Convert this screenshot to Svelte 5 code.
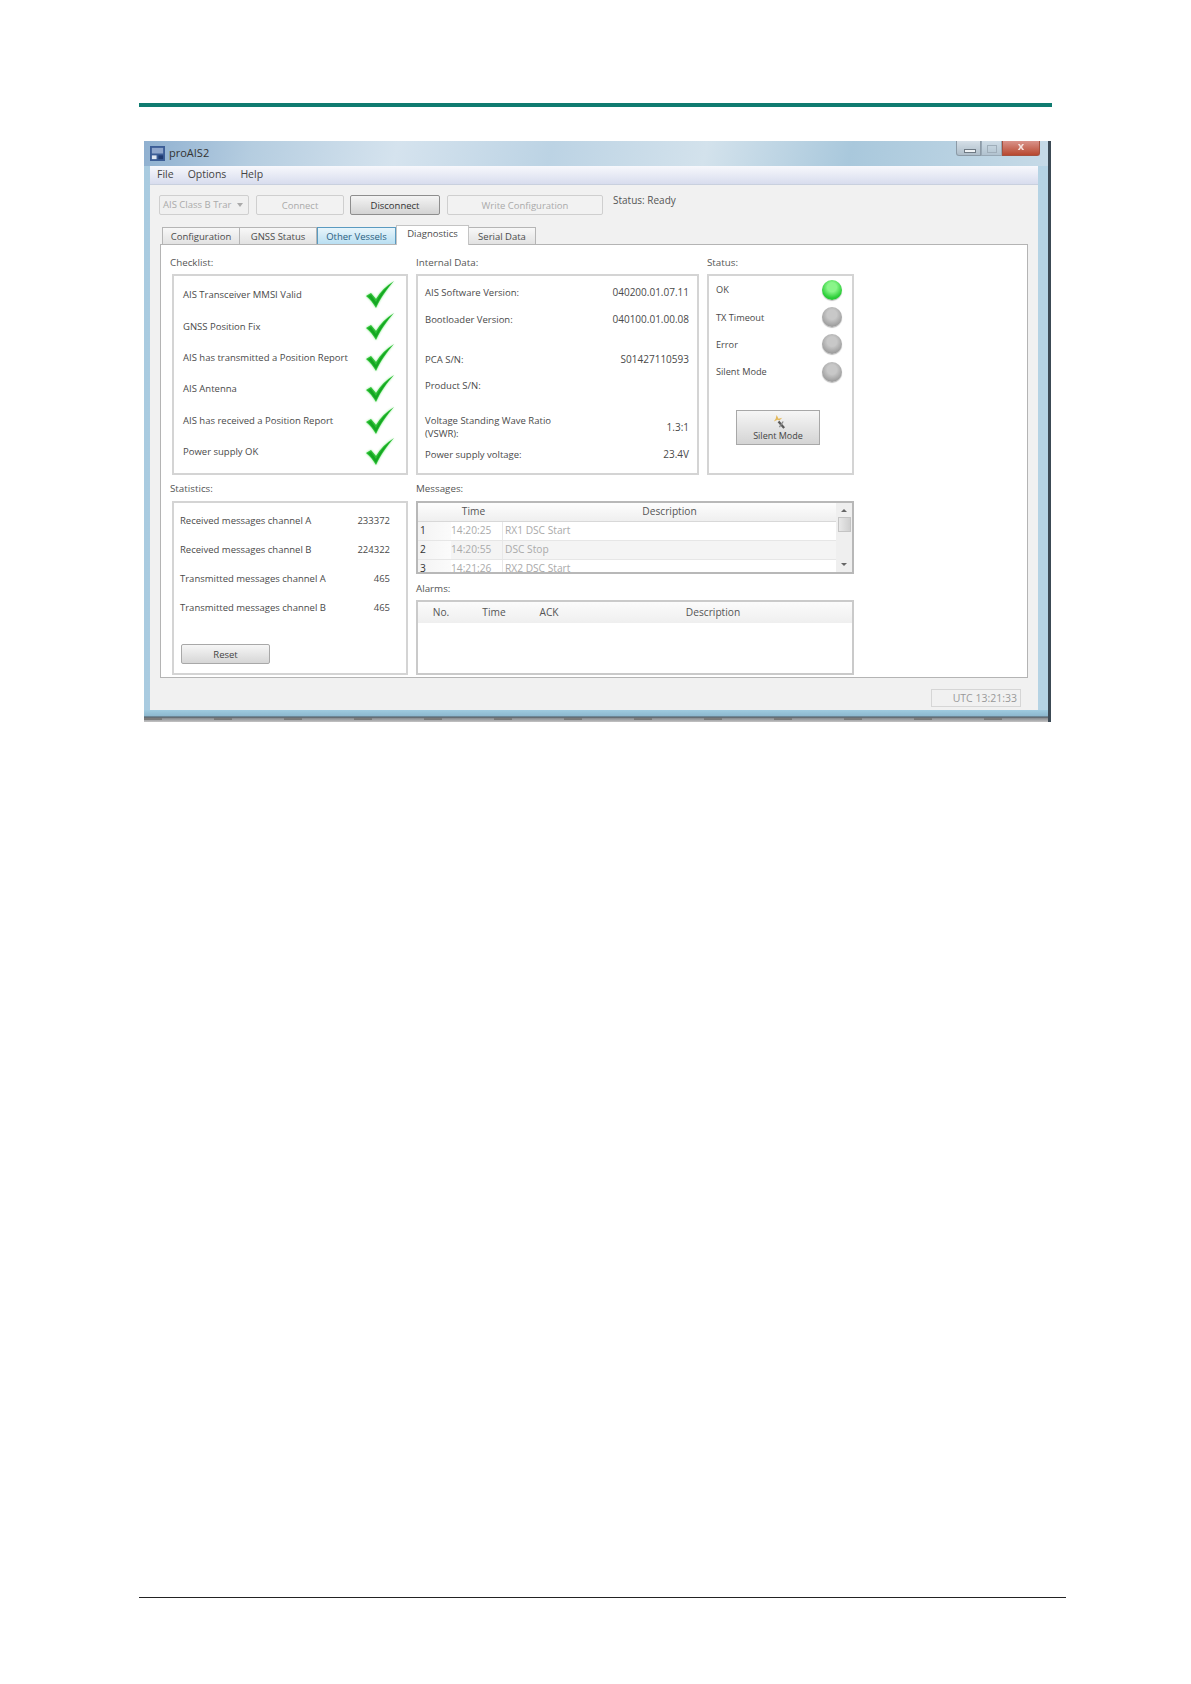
<script>
  const checklist = [
    'AIS Transceiver MMSI Valid',
    'GNSS Position Fix',
    'AIS has transmitted a Position Report',
    'AIS Antenna',
    'AIS has received a Position Report',
    'Power supply OK'
  ];
  const internal = [
    { label: 'AIS Software Version:', value: '040200.01.07.11', cls: 'r1' },
    { label: 'Bootloader Version:', value: '040100.01.00.08', cls: 'r2' },
    { label: 'PCA S/N:', value: 'S01427110593', cls: 'r3' },
    { label: 'Product S/N:', value: '', cls: 'r4' },
    { label: 'Voltage Standing Wave Ratio (VSWR):', value: '1.3:1', cls: 'r5' },
    { label: 'Power supply voltage:', value: '23.4V', cls: 'r6' }
  ];
  const leds = [
    { label: 'OK', on: true },
    { label: 'TX Timeout', on: false },
    { label: 'Error', on: false },
    { label: 'Silent Mode', on: false }
  ];
  const stats = [
    ['Received messages channel A', '233372'],
    ['Received messages channel B', '224322'],
    ['Transmitted messages channel A', '465'],
    ['Transmitted messages channel B', '465']
  ];
  const messages = [
    ['1', '14:20:25', 'RX1 DSC Start'],
    ['2', '14:20:55', 'DSC Stop'],
    ['3', '14:21:26', 'RX2 DSC Start']
  ];
  const tabs = ['Configuration', 'GNSS Status', 'Other Vessels', 'Diagnostics', 'Serial Data'];
</script>

<div class="page">
  <div class="rule"></div>

  <div class="window">
    <div class="caption">
      <svg class="appicon" viewBox="0 0 16 16">
        <rect width="16" height="16" fill="#3c5d96" />
        <rect x="2" y="2" width="12" height="6" fill="#8fa6cc" />
        <rect x="2" y="10" width="5" height="4" fill="#dfe6f2" />
        <rect x="9" y="10" width="5" height="4" fill="#1f3a70" />
      </svg>
      <span class="title">proAIS2</span>
      <div class="controls">
        <span class="ctl min"></span>
        <span class="ctl max"></span>
        <span class="ctl close">x</span>
      </div>
    </div>

    <div class="client">
      <div class="menu">
        <span>File</span>
        <span>Options</span>
        <span>Help</span>
      </div>

      <div class="toolbar">
        <div class="combo">AIS Class B Trar <span class="arrow"></span></div>
        <button class="btn connect" disabled>Connect</button>
        <button class="btn disconnect">Disconnect</button>
        <button class="btn write" disabled>Write Configuration</button>
        <span class="status">Status: Ready</span>
      </div>

      <div class="tabs">
        {#each tabs as t}
          <div class="tab" class:active={t === 'Diagnostics'} class:hot={t === 'Other Vessels'}>{t}</div>
        {/each}
      </div>

      <div class="pane">
        <div class="grid">
          <section class="check">
            <h4>Checklist:</h4>
            <div class="box checkbox">
              {#each checklist as c}
                <div class="checkrow">
                  <span>{c}</span>
                  <svg class="tick" viewBox="0 0 30 27">
                    <path d="M1 15 L6 12 L11 18 C15 11 21 5 29 0 C22 8 16 16 11 27 C8 22 5 18 1 15 Z" fill="#2cc034" />
                    <path d="M3 15 L6 14 L11 21 C15 13 20 7 26 3 C20 9 15 17 11 25 C8 21 6 18 3 15 Z" fill="#14a522" />
                  </svg>
                </div>
              {/each}
            </div>
          </section>

          <section class="internal">
            <h4>Internal Data:</h4>
            <div class="box intbox">
              {#each internal as row}
                <div class="introw {row.cls}">
                  <span class="intlabel">{row.label}</span>
                  <span class="intval">{row.value}</span>
                </div>
              {/each}
            </div>
          </section>

          <section class="state">
            <h4>Status:</h4>
            <div class="box statebox">
              {#each leds as l}
                <div class="ledrow">
                  <span>{l.label}</span>
                  <span class="led" class:on={l.on}></span>
                </div>
              {/each}
              <button class="silent">
                <svg class="wand" viewBox="0 0 16 16">
                  <path d="M6 1 L8 5 L12 4 L9 7 L7 6 L3 8 L5 5 Z" fill="#e3b85a" />
                  <path d="M8 8 L14 15" stroke="#5a5a5a" stroke-width="2.4" />
                  <path d="M13 8 L9 14" stroke="#8b8b8b" stroke-width="1.4" />
                </svg>
                <span>Silent Mode</span>
              </button>
            </div>
          </section>

          <section class="stats">
            <h4>Statistics:</h4>
            <div class="box statbox">
              {#each stats as s}
                <div class="statrow"><span>{s[0]}</span><span>{s[1]}</span></div>
              {/each}
              <button class="btn reset">Reset</button>
            </div>
          </section>

          <section class="tables">
            <h4>Messages:</h4>
            <div class="box msgbox">
              <div class="msgmain">
                <div class="msgrow head">
                  <span class="mnum"></span>
                  <span class="mtime">Time</span>
                  <span class="mdesc">Description</span>
                </div>
                {#each messages as m}
                  <div class="msgrow">
                    <span class="mnum">{m[0]}</span>
                    <span class="mtime">{m[1]}</span>
                    <span class="mdesc">{m[2]}</span>
                  </div>
                {/each}
              </div>
              <div class="scroll">
                <span class="up"></span>
                <span class="thumb"></span>
                <span class="down"></span>
              </div>
            </div>

            <h4 class="alarmlabel">Alarms:</h4>
            <div class="box alarmbox">
              <div class="alarmhead">
                <span class="ano">No.</span>
                <span class="atime">Time</span>
                <span class="aack">ACK</span>
                <span class="adesc">Description</span>
              </div>
            </div>
          </section>
        </div>
      </div>

      <div class="statusbar">
        <span class="utc">UTC 13:21:33</span>
      </div>
    </div>

    <div class="under"></div>
  </div>

  <div class="footer-rule"></div>
</div>

<style>
  :global(body) {
    margin: 0;
    background: #fff;
  }
  .page {
    width: 1191px;
    height: 1684px;
    box-sizing: border-box;
    padding: 103px 0 0 139px;
    font-family: "Open Sans", "Liberation Sans", sans-serif;
    font-size: 9.5px;
    color: #4a4a4a;
    overflow: hidden;
  }
  .rule {
    width: 913px;
    height: 4px;
    background: #0f7b70;
  }
  .footer-rule {
    width: 927px;
    height: 1px;
    background: #222;
    margin-top: 875px;
  }

  .window {
    width: 907px;
    height: 581px;
    margin: 34px 0 0 5px;
    box-sizing: border-box;
    padding: 0 10px 0 6px;
    background: linear-gradient(90deg, #a9cbe0 0, #c4dbe8 40%, #b5d3e4 100%);
    border-right: 3px solid #3c4a55;
    display: flex;
    flex-direction: column;
    filter: blur(0.7px);
  }
  .caption {
    height: 25px;
    margin: 0 -10px 0 -6px;
    padding: 0 8px 0 6px;
    display: flex;
    align-items: flex-start;
    background: linear-gradient(102deg, #8fb0d0 0, #b5cde0 12%, #d5e3ee 28%, #bcd3e4 45%, #d3e2ec 62%, #a9c8dc 78%, #c6dae7 100%);
    color: #333;
  }
  .appicon {
    width: 15px;
    height: 15px;
    margin-top: 5px;
  }
  .title {
    margin: 4px 0 0 4px;
    font-size: 11px;
  }
  .controls {
    margin-left: auto;
    display: flex;
    height: 15px;
  }
  .ctl {
    height: 15px;
    box-sizing: border-box;
    border: 1px solid #8c9aa6;
    border-top: none;
    background: linear-gradient(#d5dfe7, #aebdc9);
    position: relative;
  }
  .min { width: 25px; border-radius: 0 0 0 3px; }
  .min::after {
    content: '';
    position: absolute;
    left: 7px;
    top: 8px;
    width: 10px;
    height: 2px;
    border: 1px solid #6f7a84;
    background: #eef2f5;
  }
  .max { width: 21px; opacity: 0.75; }
  .max::after {
    content: '';
    position: absolute;
    left: 5px;
    top: 4px;
    width: 8px;
    height: 6px;
    border: 1px solid #96a2ac;
  }
  .close {
    width: 38px;
    border-color: #a5513f;
    border-radius: 0 0 3px 0;
    background: linear-gradient(#d9938a, #b8482f);
    color: #f5e0dc;
    font-size: 11px;
    font-weight: 700;
    line-height: 10px;
    text-align: center;
  }

  .client {
    height: 544px;
    background: #f1f1f1;
    display: flex;
    flex-direction: column;
    flex: none;
  }
  .menu {
    height: 19px;
    box-sizing: border-box;
    background: linear-gradient(#f7f8fc, #d8ddee);
    border-bottom: 1px solid #c9d0de;
    display: flex;
    gap: 14px;
    padding: 1px 0 0 7px;
    font-size: 10.5px;
    line-height: 15px;
    color: #444;
  }

  .toolbar {
    margin-top: 10px;
    height: 20px;
    padding-left: 9px;
    display: flex;
    align-items: flex-start;
    gap: 7px;
  }
  .combo {
    width: 90px;
    height: 20px;
    box-sizing: border-box;
    border: 1px solid #cfcfcf;
    border-radius: 2px;
    padding-left: 3px;
    line-height: 18px;
    color: #aaa;
    background: #f0f0f0;
    white-space: nowrap;
    display: flex;
    align-items: center;
  }
  .arrow {
    width: 0;
    height: 0;
    margin-left: 6px;
    border: 3px solid transparent;
    border-top: 4px solid #aaa;
    border-bottom: none;
  }
  .btn {
    height: 20px;
    box-sizing: border-box;
    border: 1px solid #cfcfcf;
    border-radius: 2px;
    padding: 0;
    font: inherit;
    background: #f2f2f2;
    color: #aaa;
  }
  .connect { width: 88px; }
  .disconnect {
    width: 90px;
    margin-left: -1px;
    border-color: #8e8e8e;
    background: linear-gradient(#f4f4f4, #d3d3d3);
    color: #333;
  }
  .write { width: 156px; }
  .status {
    margin: -2px 0 0 3px;
    font-size: 10px;
    color: #555;
  }

  .tabs {
    margin-top: 11px;
    padding-left: 12px;
    height: 18px;
    display: flex;
    align-items: flex-end;
    position: relative;
    z-index: 1;
  }
  .tab {
    width: 78px;
    height: 17px;
    box-sizing: border-box;
    line-height: 17px;
    text-align: center;
    border: 1px solid #b5b5b5;
    border-bottom: none;
    border-left: none;
    background: linear-gradient(#f8f8f8, #e2e2e2);
    color: #4c4c4c;
    white-space: nowrap;
  }
  .tab:first-child { border-left: 1px solid #b5b5b5; }
  .tab:nth-child(2) { width: 77px; }
  .tab:nth-child(3) { width: 79px; }
  .tab:nth-child(5) { width: 67px; }
  .tab.hot {
    background: linear-gradient(#e8f5fb, #b9dff2);
    border-color: #5a9ac0;
    color: #2c5f80;
    border-left: 1px solid #5a9ac0;
  }
  .tab.active {
    width: 73px;
    height: 20px;
    margin-bottom: -1px;
    background: #fff;
    border: 1px solid #c4c4c4;
    border-bottom: none;
    line-height: 15px;
  }

  .pane {
    height: 434px;
    margin: 0 10px;
    box-sizing: border-box;
    border: 1px solid #b4b4b4;
    background: #fff;
    padding: 12px 0 0 9px;
  }
  .grid {
    display: grid;
    grid-template-columns: 238px 283px 147px;
    grid-template-rows: 226px auto;
    column-gap: 8px;
    width: 690px;
  }
  .check { padding-left: 2px; }
  h4 {
    margin: 0;
    height: 17px;
    font-size: 9.8px;
    font-weight: 400;
    line-height: 12px;
    color: #555;
  }
  .stats h4, .tables h4:first-child { height: 18px; }
  .check h4, .stats h4 { margin-left: -2px; }
  .box {
    box-sizing: border-box;
    border: 2px solid #d4d4d4;
    background: #fff;
  }

  .checkbox {
    width: 236px;
    height: 201px;
    padding: 3px 11px 0 9px;
    display: flex;
    flex-direction: column;
  }
  .checkrow {
    height: 31.4px;
    flex: none;
    display: flex;
    align-items: center;
    justify-content: space-between;
  }
  .tick {
    width: 30px;
    height: 27px;
    filter: drop-shadow(0 0 1px #8be88f);
  }

  .intbox {
    height: 201px;
    padding: 5px 8px 0 7px;
  }
  .introw {
    display: flex;
    justify-content: space-between;
    align-items: flex-end;
    line-height: 13px;
  }
  .intlabel { width: 145px; }
  .r1 { margin-top: 5px; }
  .r2 { margin-top: 14px; }
  .r3 { margin-top: 27px; }
  .r4 { margin-top: 13px; }
  .r5 { margin-top: 22px; align-items: center; }
  .r6 { margin-top: 8px; }
  .intval { white-space: nowrap; font-size: 10px; }

  .statebox {
    height: 201px;
    padding: 0 10px 0 7px;
  }
  .ledrow {
    height: 27.4px;
    display: flex;
    align-items: center;
    justify-content: space-between;
    font-size: 9.2px;
  }
  .led {
    width: 20px;
    height: 20px;
    border-radius: 50%;
    background: radial-gradient(circle at 50% 38%, #c8c8c8 0 30%, #a8a8a8 62%, #808080 100%);
    box-shadow: 0 1px 1px #bbb;
  }
  .led.on {
    background: radial-gradient(circle at 50% 36%, #8af58a 0 28%, #2ecf3a 65%, #19a828 100%);
  }
  .silent {
    display: flex;
    flex-direction: column;
    align-items: center;
    width: 84px;
    height: 35px;
    margin: 24px 0 0 20px;
    padding: 3px 0 0;
    box-sizing: border-box;
    border: 1px solid #a8a8a8;
    font: inherit;
    font-size: 9px;
    line-height: 12px;
    color: #444;
    background: linear-gradient(#f6f6f6, #d4d4d4);
  }
  .wand {
    width: 15px;
    height: 15px;
    margin-bottom: 1px;
    flex: none;
  }

  .stats {
    padding-left: 2px;
  }
  .statbox {
    width: 236px;
    height: 174px;
    padding: 3px 16px 0 6px;
    display: flex;
    flex-direction: column;
  }
  .statrow {
    height: 29px;
    flex: none;
    display: flex;
    justify-content: space-between;
    align-items: center;
  }
  .reset {
    width: 89px;
    margin: 22px 0 0 1px;
    flex: none;
    border-color: #a8a8a8;
    background: linear-gradient(#f6f6f6, #d6d6d6);
    color: #444;
  }

  .tables {
    grid-column: 2 / 4;
  }
  .msgbox {
    width: 438px;
    height: 73px;
    display: flex;
    overflow: hidden;
    border-color: #b8b8b8;
    font-size: 10.2px;
  }
  .msgmain {
    flex: 1;
  }
  .msgrow {
    display: flex;
    height: 18px;
    line-height: 17px;
    border-bottom: 1px solid #e6e6e6;
    color: #aaa;
  }
  .msgrow:nth-child(3) { background: #f4f4f4; }
  .msgrow.head {
    height: 18px;
    color: #555;
    background: linear-gradient(#fdfdfd, #efefef);
    border-bottom: 1px solid #d8d8d8;
  }
  .mnum {
    width: 33px;
    padding-left: 2px;
    box-sizing: border-box;
    color: #333;
    background: linear-gradient(90deg, #f3f3f3, #fbfbfb);
  }
  .head .mnum { background: none; }
  .mtime {
    width: 51px;
    border-right: 1px solid #e8e8e8;
  }
  .head .mtime {
    text-align: center;
    padding-right: 6px;
    box-sizing: border-box;
    border: none;
  }
  .mdesc {
    padding-left: 2px;
    flex: 1;
  }
  .head .mdesc {
    text-align: center;
    padding-right: 1px;
  }
  .scroll {
    width: 16px;
    flex: none;
    background: #efefef;
    display: flex;
    flex-direction: column;
    align-items: center;
  }
  .up, .down {
    width: 0;
    height: 0;
    border: 3px solid transparent;
  }
  .up {
    border-bottom: 3px solid #666;
    border-top: none;
    margin-top: 6px;
  }
  .thumb {
    width: 13px;
    height: 15px;
    margin-top: 5px;
    background: linear-gradient(90deg, #e8e8e8, #cfcfcf);
    border: 1px solid #c4c4c4;
    box-sizing: border-box;
  }
  .down {
    border-top: 3px solid #666;
    border-bottom: none;
    margin-top: auto;
    margin-bottom: 6px;
  }

  .alarmlabel {
    margin-top: 9px;
    height: 17px;
  }
  .alarmbox {
    width: 438px;
    height: 75px;
    border-color: #cacaca;
    font-size: 10.2px;
  }
  .alarmhead {
    height: 21px;
    display: flex;
    line-height: 20px;
    background: linear-gradient(#fbfbfb, #efefef);
    color: #555;
  }
  .ano { width: 46px; text-align: center; }
  .atime { width: 60px; text-align: center; }
  .aack { width: 50px; text-align: center; }
  .adesc { flex: 1; text-align: center; }

  .statusbar {
    flex: 1;
    display: flex;
    justify-content: flex-end;
    align-items: flex-start;
    padding: 11px 17px 0 0;
  }
  .utc {
    width: 90px;
    height: 18px;
    box-sizing: border-box;
    border: 1px solid #d6d6d6;
    text-align: right;
    padding-right: 3px;
    font-size: 10.5px;
    line-height: 16px;
    color: #999;
  }

  .under {
    height: 12px;
    margin: 0 -10px 0 -6px;
    flex: none;
    background:
      repeating-linear-gradient(90deg, #7a7a7a 0 18px, transparent 18px 70px) 0 8px / 100% 2px no-repeat,
      linear-gradient(#9fcbe0 0, #8db8cf 50%, #4e5a64 58%, #8c9094 70%, #c4c4c4 100%);
  }
</style>
